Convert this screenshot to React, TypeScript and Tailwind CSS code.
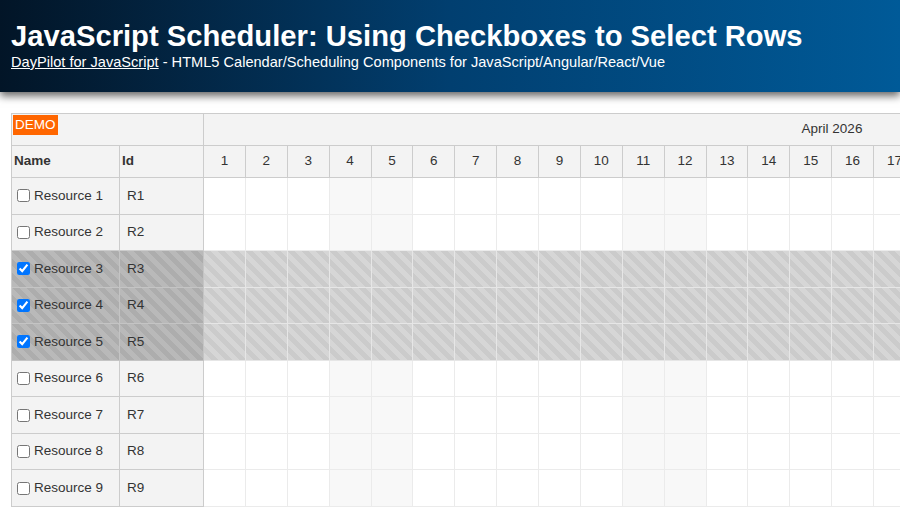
import { useState } from 'react';

const resources = Array.from({ length: 9 }, (_, i) => ({
  id: `R${i + 1}`,
  name: `Resource ${i + 1}`,
}));

const days = Array.from({ length: 30 }, (_, i) => i + 1);
// April 2026 weekends
const weekend = (d: number) => [4, 5, 11, 12, 18, 19, 25, 26].includes(d);

const App = () => {
  const [selected, setSelected] = useState<string[]>(['R3', 'R4', 'R5']);

  const toggle = (id: string) => {
    setSelected((prev) =>
      prev.includes(id) ? prev.filter((r) => r !== id) : [...prev, id]
    );
  };

  return (
    <div className="h-[509px] w-[900px] overflow-hidden bg-white font-['Liberation_Sans',Arial,sans-serif] text-[#333]">
      <header className="relative z-10 h-[92px] bg-gradient-to-r from-[#021527] via-[#013f70] to-[#005a98] pl-[11px] pt-[20px] text-white shadow-[0_4px_8px_rgba(0,0,0,0.6)]">
        <h1 className="text-[29.2px] font-bold leading-[33px]">
          JavaScript Scheduler: Using Checkboxes to Select Rows
        </h1>
        <div className="text-[14.6px] leading-[18px]">
          <a className="underline">DayPilot for JavaScript</a> - HTML5
          Calendar/Scheduling Components for JavaScript/Angular/React/Vue
        </div>
      </header>

      <div className="overflow-hidden pl-[11px] pt-[21px]">
        <div className="w-[1449px] border-l border-t border-[#ccc] text-[13.5px]">
          {/* time header, month */}
          <div className="flex h-[32px]">
            <div className="w-[192px] shrink-0 border-b border-r border-[#ccc] bg-[#f3f3f3] pl-px pt-px">
              <span className="inline-block bg-[#ff6600] px-[2px] py-[2px] leading-[16px] text-white">
                DEMO
              </span>
            </div>
            <div className="flex w-[1256px] items-center justify-center border-b border-[#ccc] bg-[#f3f3f3]">
              April 2026
            </div>
          </div>
          {/* time header, days */}
          <div className="flex h-[32px]">
            <div className="flex w-[108px] shrink-0 items-center border-b border-r border-[#ccc] bg-[#f3f3f3] pl-[2px] font-bold">
              Name
            </div>
            <div className="flex w-[84px] shrink-0 items-center border-b border-r border-[#ccc] bg-[#f3f3f3] pl-[2px] font-bold">
              Id
            </div>
            {days.map((d) => (
              <div
                key={d}
                className="flex w-[41.875px] shrink-0 items-center justify-center border-b border-r border-[#ccc] bg-[#f3f3f3]"
              >
                {d}
              </div>
            ))}
          </div>
          {/* rows */}
          {resources.map((r) => {
            const on = selected.includes(r.id);
            return (
              <div key={r.id} className="flex h-[36.56px]">
                <div
                  className={
                    on
                      ? 'flex w-[108px] shrink-0 items-center gap-[4px] border-b border-r border-[#c4c4c4] bg-[repeating-linear-gradient(45deg,#b9b9b9_0_5px,#adadad_5px_10px)] pl-[5px]'
                      : 'flex w-[108px] shrink-0 items-center gap-[4px] border-b border-r border-[#ccc] bg-[#f3f3f3] pl-[5px]'
                  }
                >
                  <input
                    type="checkbox"
                    checked={on}
                    onChange={() => toggle(r.id)}
                    className="m-0 h-[13px] w-[13px]"
                  />
                  {r.name}
                </div>
                <div
                  className={
                    on
                      ? 'flex w-[84px] shrink-0 items-center border-b border-r border-[#c4c4c4] bg-[repeating-linear-gradient(45deg,#b9b9b9_0_5px,#adadad_5px_10px)] pl-[7px]'
                      : 'flex w-[84px] shrink-0 items-center border-b border-r border-[#ccc] bg-[#f3f3f3] pl-[7px]'
                  }
                >
                  {r.id}
                </div>
                {days.map((d) => (
                  <div
                    key={d}
                    className={
                      on
                        ? 'w-[41.875px] shrink-0 border-b border-r border-[#e6e6e6] bg-[repeating-linear-gradient(45deg,#d6d6d6_0_5px,#cbcbcb_5px_10px)]'
                        : weekend(d)
                          ? 'w-[41.875px] shrink-0 border-b border-r border-[#ebebeb] bg-[#f8f8f8]'
                          : 'w-[41.875px] shrink-0 border-b border-r border-[#ebebeb] bg-white'
                    }
                  />
                ))}
              </div>
            );
          })}
        </div>
      </div>
    </div>
  );
};

export default App;
